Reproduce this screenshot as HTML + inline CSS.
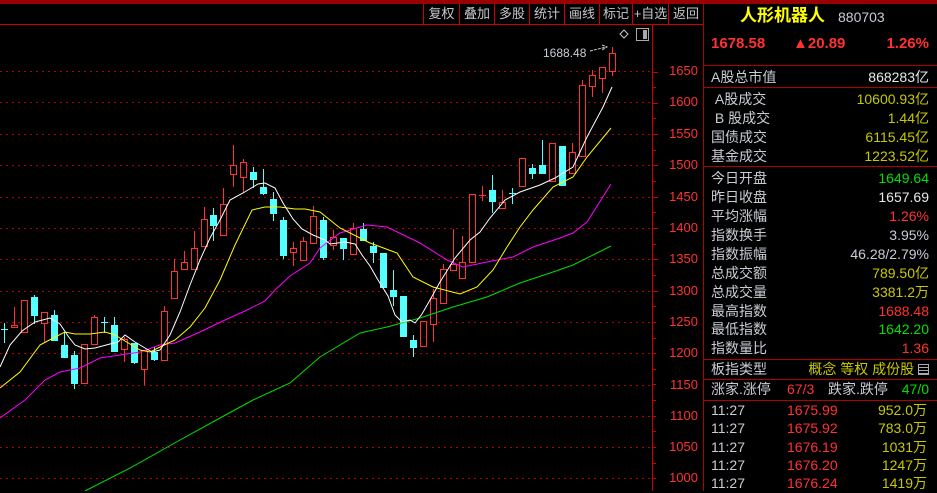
<!DOCTYPE html>
<html><head><meta charset="utf-8">
<style>
*{margin:0;padding:0;box-sizing:border-box}
body{width:937px;height:491px;background:#000;overflow:hidden;position:relative;font-family:"Liberation Sans","Noto Sans CJK SC",sans-serif;color:#c8ccd4}
.abs{position:absolute;white-space:nowrap}
.tb{position:absolute;top:4px;height:20px;font-size:13px;line-height:20px;color:#c8c8c8;text-align:center}
.row{position:absolute;left:711px;width:218px;height:19px;font-size:14px;line-height:19px}
.row .l{position:absolute;left:0;color:#c8ccd4}
.row .v{position:absolute;right:0}
.y{color:#c8c800}.g{color:#00e000}.r{color:#ff3232}.w{color:#e8e8e8}
.hl{position:absolute;left:703px;width:234px;height:1px;background:#b00000}
.ax{position:absolute;right:239px;font-size:13px;color:#ff3232;line-height:14px}
</style></head><body>
<div class="abs" style="left:0;top:0;width:937px;height:4px;background:#990000"></div>
<div class="abs" style="left:0;top:24px;width:703px;height:1px;background:#cc0000"></div>
<div class="abs" style="left:703px;top:4px;width:1px;height:487px;background:#b00000"></div>
<div class="abs" style="left:652px;top:25px;width:1px;height:466px;background:#cc0000"></div>
<div class="abs" style="left:423px;top:4px;width:1px;height:20px;background:#cc0000"></div>
<div class="tb" style="left:424px;width:35px">复权</div>
<div class="abs" style="left:459px;top:4px;width:1px;height:20px;background:#cc0000"></div>
<div class="tb" style="left:460px;width:34px">叠加</div>
<div class="abs" style="left:494px;top:4px;width:1px;height:20px;background:#cc0000"></div>
<div class="tb" style="left:495px;width:34px">多股</div>
<div class="abs" style="left:529px;top:4px;width:1px;height:20px;background:#cc0000"></div>
<div class="tb" style="left:530px;width:34px">统计</div>
<div class="abs" style="left:564px;top:4px;width:1px;height:20px;background:#cc0000"></div>
<div class="tb" style="left:565px;width:34px">画线</div>
<div class="abs" style="left:599px;top:4px;width:1px;height:20px;background:#cc0000"></div>
<div class="tb" style="left:600px;width:32px">标记</div>
<div class="abs" style="left:632px;top:4px;width:1px;height:20px;background:#cc0000"></div>
<div class="tb" style="left:633px;width:35px">+自选</div>
<div class="abs" style="left:668px;top:4px;width:1px;height:20px;background:#cc0000"></div>
<div class="tb" style="left:669px;width:34px">返回</div>

<svg class="abs" style="left:0;top:0" width="703" height="491" id="ch">
<g stroke="#b00000" stroke-width="1" stroke-dasharray="2,4">
<line x1="0" y1="71.5" x2="652" y2="71.5"/><line x1="0" y1="102.5" x2="652" y2="102.5"/><line x1="0" y1="134.5" x2="652" y2="134.5"/><line x1="0" y1="165.5" x2="652" y2="165.5"/><line x1="0" y1="197.5" x2="652" y2="197.5"/><line x1="0" y1="228.5" x2="652" y2="228.5"/><line x1="0" y1="259.5" x2="652" y2="259.5"/><line x1="0" y1="291.5" x2="652" y2="291.5"/><line x1="0" y1="322.5" x2="652" y2="322.5"/><line x1="0" y1="353.5" x2="652" y2="353.5"/><line x1="0" y1="385.5" x2="652" y2="385.5"/><line x1="0" y1="416.5" x2="652" y2="416.5"/><line x1="0" y1="447.5" x2="652" y2="447.5"/><line x1="0" y1="478.5" x2="652" y2="478.5"/>
</g>
<g id="ticks" stroke="#cc0000"></g>
<g id="cd"></g>
<polyline fill="none" stroke="#00e000" stroke-width="1" points="85,491 130,468 180,440 220,418 253,400 290,383 320,357 360,333 387,327 420,318 453,307 487,297 520,283 553,272 573,265 611,246"/>
<polyline fill="none" stroke="#ff00ff" stroke-width="1" points="0,418 25,400 45,380 60,372 80,368 100,358 120,355 140,352 160,345 175,343 200,332 225,320 245,311 265,301 275,290 290,276 310,263 320,248 340,233 367,225 387,227 420,243 447,260 463,267 487,262 513,257 533,247 560,238 573,233 587,222 611,184"/>
<polyline fill="none" stroke="#ffff00" stroke-width="1" points="0,388 20,372 40,345 55,337 65,332 75,334 90,334 105,332 115,335 125,341 140,350 150,352 160,347 175,340 190,327 205,308 220,280 235,245 252,210 265,207 280,207 295,209 305,209 320,212 340,228 370,243 397,253 413,277 433,287 460,294 477,287 493,270 507,247 520,227 533,210 553,187 573,177 587,157 611,128"/>
<polyline fill="none" stroke="#ffffff" stroke-width="1" points="0,367 10,345 22,331 35,322 50,318 60,324 68,336 75,345 85,349 95,348 110,344 118,342 125,335 135,342 145,348 152,352 160,350 170,335 180,312 190,285 200,260 210,238 220,220 230,200 243,193 258,184 265,183 275,188 283,203 293,219 302,229 313,235 325,240 330,244 345,242 355,244 362,255 370,266 378,280 388,296 395,315 402,322 410,320 415,323 422,314 430,300 440,282 455,258 470,240 480,232 490,218 505,200 520,192 540,185 555,178 573,167 587,137 603,107 612,87"/>
<text x="543" y="57" fill="#c8ccd4" font-size="12" font-family="Liberation Sans,sans-serif">1688.48</text>
<path d="M590 51 L606 47 M602 45 L607 47 L602 50" stroke="#c8c8c8" fill="none" stroke-width="1" stroke-dasharray="3,1"/>
<path d="M624 30 L628 34 L624 38 L620 34 Z" stroke="#c8c8c8" fill="none"/>
<rect x="636.5" y="28.5" width="12" height="12" stroke="#aaa" fill="none"/><rect x="643" y="30" width="4" height="9" fill="#aaa"/>
</svg>
<div class="ax" style="top:64px">1650</div>
<div class="ax" style="top:95px">1600</div>
<div class="ax" style="top:127px">1550</div>
<div class="ax" style="top:158px">1500</div>
<div class="ax" style="top:190px">1450</div>
<div class="ax" style="top:221px">1400</div>
<div class="ax" style="top:252px">1350</div>
<div class="ax" style="top:284px">1300</div>
<div class="ax" style="top:315px">1250</div>
<div class="ax" style="top:346px">1200</div>
<div class="ax" style="top:378px">1150</div>
<div class="ax" style="top:409px">1100</div>
<div class="ax" style="top:440px">1050</div>
<div class="ax" style="top:471px">1000</div>

<div class="abs" style="left:740px;top:5px;font-size:17px;font-weight:bold;color:#ffff00;line-height:22px">人形机器人</div>
<div class="abs" style="left:838px;top:8px;font-size:14px;color:#c8ccd4;line-height:18px">880703</div>
<div class="abs" style="left:711px;top:35px;font-size:15px;font-weight:bold;color:#ff3232;line-height:18px">1678.58</div>
<div class="abs" style="left:793px;top:35px;font-size:15px;font-weight:bold;color:#ff3232;line-height:18px">▲20.89</div>
<div class="abs" style="right:8px;top:35px;font-size:15px;font-weight:bold;color:#ff3232;line-height:18px">1.26%</div>
<div class="hl" style="top:65px"></div>
<div class="row" style="top:68px"><span class="l">A股总市值</span><span class="v w">868283亿</span></div>
<div class="hl" style="top:87px"></div>
<div class="row" style="top:90px"><span class="l">&nbsp;A股成交</span><span class="v y">10600.93亿</span></div>
<div class="row" style="top:109px"><span class="l">&nbsp;B 股成交</span><span class="v y">1.44亿</span></div>
<div class="row" style="top:128px"><span class="l">国债成交</span><span class="v y">6115.45亿</span></div>
<div class="row" style="top:147px"><span class="l">基金成交</span><span class="v y">1223.52亿</span></div>
<div class="hl" style="top:166px"></div>
<div class="row" style="top:169px"><span class="l">今日开盘</span><span class="v g">1649.64</span></div>
<div class="row" style="top:188px"><span class="l">昨日收盘</span><span class="v w">1657.69</span></div>
<div class="row" style="top:207px"><span class="l">平均涨幅</span><span class="v r">1.26%</span></div>
<div class="row" style="top:226px"><span class="l">指数换手</span><span class="v" style="color:#c8ccd4">3.95%</span></div>
<div class="row" style="top:245px"><span class="l">指数振幅</span><span class="v" style="color:#c8ccd4">46.28/2.79%</span></div>
<div class="row" style="top:264px"><span class="l">总成交额</span><span class="v y">789.50亿</span></div>
<div class="row" style="top:283px"><span class="l">总成交量</span><span class="v y">3381.2万</span></div>
<div class="row" style="top:302px"><span class="l">最高指数</span><span class="v r">1688.48</span></div>
<div class="row" style="top:320px"><span class="l">最低指数</span><span class="v g">1642.20</span></div>
<div class="row" style="top:339px"><span class="l">指数量比</span><span class="v r">1.36</span></div>
<div class="hl" style="top:359px"></div>
<div class="row" style="top:360px"><span class="l">板指类型</span><span class="v y">概念 等权 成份股 <span style="display:inline-block;width:11px;height:11px;border:1px solid #aaa;vertical-align:-1px;background:repeating-linear-gradient(#000 0 2px,#aaa 2px 3px)"></span></span></div>
<div class="hl" style="top:379px"></div>
<div class="row" style="top:380px"><span class="l">涨家.涨停</span><span class="abs r" style="left:76px">67/3</span><span class="abs" style="left:117px">跌家.跌停</span><span class="v g">47/0</span></div>
<div class="hl" style="top:400px"></div>
<div class="row" style="top:401px"><span class="l">11:27</span><span class="abs r" style="left:76px">1675.99</span><span class="v y" style="right:2px">952.0万</span></div>
<div class="row" style="top:419px"><span class="l">11:27</span><span class="abs r" style="left:76px">1675.92</span><span class="v y" style="right:2px">783.0万</span></div>
<div class="row" style="top:438px"><span class="l">11:27</span><span class="abs r" style="left:76px">1676.19</span><span class="v y" style="right:2px">1031万</span></div>
<div class="row" style="top:456px"><span class="l">11:27</span><span class="abs r" style="left:76px">1676.20</span><span class="v y" style="right:2px">1247万</span></div>
<div class="row" style="top:474px"><span class="l">11:27</span><span class="abs r" style="left:76px">1676.24</span><span class="v y" style="right:2px">1419万</span></div>

<script>
var D=[[329,330,323,343,'c'],[325,328,307,328,'r'],[300,333,300,333,'r'],[297,316,295,324,'c'],[312,324,312,342,'r'],[315,341,310,341,'c'],[345,358,332,358,'c'],[355,384,351,389,'c'],[344,384,344,384,'r'],[317,345,315,345,'r'],[322,323,317,333,'c'],[325,352,317,352,'c'],[339,350,337,362,'r'],[343,363,343,364,'c'],[350,370,350,385,'r'],[352,360,347,361,'c'],[311,361,306,361,'r'],[271,299,259,299,'r'],[262,270,251,270,'r'],[248,270,231,270,'r'],[219,247,207,247,'r'],[215,226,208,241,'c'],[204,236,188,236,'r'],[165,175,145,187,'r'],[162,178,159,193,'r'],[172,180,167,188,'c'],[187,194,169,195,'c'],[199,214,192,221,'c'],[220,256,217,259,'c'],[248,253,242,266,'r'],[241,261,237,261,'r'],[216,244,206,244,'r'],[220,258,217,260,'c'],[237,246,230,250,'r'],[238,249,238,260,'c'],[228,255,223,255,'r'],[229,241,223,241,'c'],[246,253,242,263,'c'],[253,288,253,288,'c'],[290,297,270,306,'c'],[296,337,296,337,'c'],[340,348,335,357,'c'],[321,347,321,347,'r'],[298,325,289,342,'r'],[269,304,264,304,'r'],[264,271,229,271,'r'],[262,279,236,279,'r'],[194,263,194,263,'r'],[195,196,186,201,'r'],[190,202,175,213,'c'],[202,209,190,209,'r'],[193,194,188,204,'c'],[158,187,158,187,'r'],[168,174,164,179,'c'],[165,174,140,174,'c'],[143,182,143,182,'r'],[146,186,146,186,'c'],[152,174,143,174,'r'],[85,157,80,157,'r'],[75,87,70,97,'r'],[67,79,67,93,'r'],[53,72,47,76,'r']];
var s='';
for(var i=0;i<D.length;i++){var d=D[i];var x=Math.round(4.3+9.96*i);
var col=d[4]=='r'?'#ff3232':'#54ffff';var cx=x+0.5;
s+='<line x1="'+cx+'" x2="'+cx+'" y1="'+d[2]+'" y2="'+d[3]+'" stroke="'+col+'"/>';
var h=Math.max(1,d[1]-d[0]);
if(d[4]=='r'){ if(h<=2) s+='<rect x="'+(x-3)+'" y="'+d[0]+'" width="7" height="1" fill="'+col+'"/>'; else s+='<rect x="'+(x-2.5)+'" y="'+(d[0]+0.5)+'" width="6" height="'+(h-1)+'" fill="#000" stroke="'+col+'"/>';}
else s+='<rect x="'+(x-3)+'" y="'+d[0]+'" width="7" height="'+h+'" fill="'+col+'"/>';}
document.getElementById('cd').innerHTML=s;
var t='';for(var y=71.5;y<491;y+=15.65){t+='<line x1="652" x2="'+(Math.abs(((y-71.5)/15.65)%2)<0.5?658:656)+'" y1="'+Math.round(y)+'.5" y2="'+Math.round(y)+'.5"/>';}
document.getElementById('ticks').innerHTML=t;
</script>
</body></html>
